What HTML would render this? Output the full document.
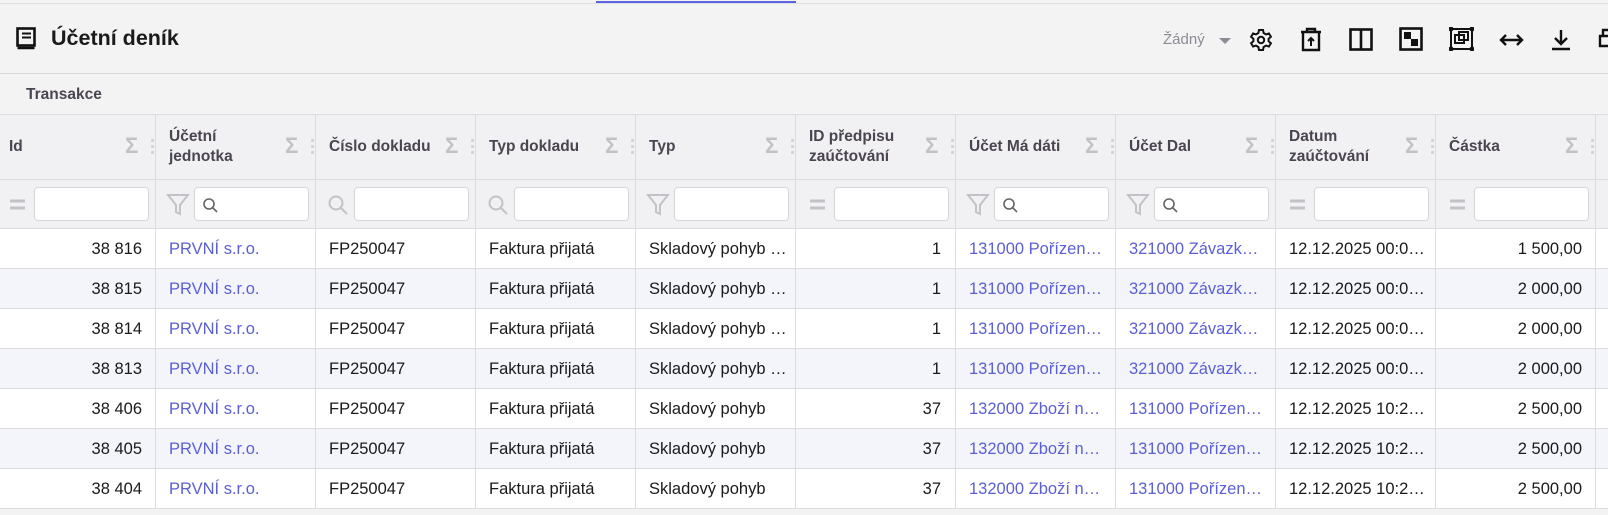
<!DOCTYPE html>
<html><head><meta charset="utf-8"><style>
*{box-sizing:border-box;margin:0;padding:0}
body{width:1608px;height:515px;overflow:hidden;background:#f3f3f4;font-family:"Liberation Sans",sans-serif;position:relative;color:#1a1a1a}
.abs{position:absolute}
.h{position:absolute;font-size:15.5px;font-weight:bold;color:#4a4550;line-height:20px}
.inp{position:absolute;top:187px;height:34px;width:115px;background:#fff;border:1px solid #d6d6da;border-radius:4px}
.vl{position:absolute;top:114px;width:1px;height:395px;background:#dcdcdf}
.hl{position:absolute;left:0;width:1608px;height:1px;background:#dcdcdf}
.sig{position:absolute;top:133px;font-size:22px;color:#c2c2c6;font-weight:bold}
.dots{position:absolute;top:139px;width:3px}
.dots i{display:block;width:3px;height:3px;background:#d2d2d6;margin-bottom:3px;border-radius:1px}
.r{position:relative;height:40px;font-size:16.5px;line-height:40px}
.r span{position:absolute;white-space:nowrap}
.l{color:#5b5fd6}
</style></head><body>
<div class="hl" style="top:3px;background:#e0e0e3"></div>
<div class="abs" style="left:596px;top:1px;width:200px;height:2px;background:#5b63e0"></div>
<div class="hl" style="top:73px"></div>
<svg class="abs" style="left:16px;top:27px" width="22" height="23" viewBox="0 0 22 23"><rect x="1.5" y="1.5" width="17" height="17" fill="none" stroke="#111" stroke-width="2.6"/><path d="M1.5 21h17" stroke="#111" stroke-width="2.4"/><path d="M6 6.5h9M6 10.5h9" stroke="#111" stroke-width="2"/></svg>
<div class="abs" style="left:51px;top:26px;font-size:21.5px;font-weight:bold;color:#1a1a1a">Účetní deník</div>
<div class="abs" style="left:1163px;top:31px;font-size:15px;color:#8c8c96">Žádný</div>
<div class="abs" style="left:1219px;top:38px;width:0;height:0;border-left:6px solid transparent;border-right:6px solid transparent;border-top:6px solid #8c8c96"></div>
<svg class="abs" style="left:1249px;top:28px" width="24" height="24" viewBox="0 0 24 24" fill="none" stroke="#111" stroke-width="2"><path d="M10 2h4l.6 3 2.4 1.4 2.9-1 2 3.4-2.3 2v2.4l2.3 2-2 3.4-2.9-1L14.6 19l-.6 3h-4l-.6-3L7 17.6l-2.9 1-2-3.4 2.3-2v-2.4l-2.3-2 2-3.4 2.9 1L9.4 5z"/><circle cx="12" cy="12" r="3.2"/></svg>
<svg class="abs" style="left:1300px;top:27px" width="22" height="25" viewBox="0 0 22 25" fill="none" stroke="#111" stroke-width="2.4"><path d="M1 5h20M7 5V2h8v3M3 5v18h16V5"/><path d="M11 19v-8M8 14l3-3 3 3" stroke-width="2"/></svg>
<svg class="abs" style="left:1349px;top:28px" width="24" height="23" viewBox="0 0 24 23" fill="none" stroke="#111" stroke-width="2.6"><rect x="1.5" y="1.5" width="21" height="20"/><path d="M12 2v20"/></svg>
<svg class="abs" style="left:1399px;top:27px" width="24" height="24" viewBox="0 0 24 24"><rect x="1.5" y="1.5" width="21" height="21" fill="none" stroke="#111" stroke-width="2.6"/><rect x="5" y="5" width="7" height="7" fill="#111"/><rect x="12" y="12" width="7" height="7" fill="#111"/></svg>
<svg class="abs" style="left:1449px;top:27px" width="25" height="24" viewBox="0 0 25 24" fill="none" stroke="#111" stroke-width="2"><rect x="2" y="2" width="21" height="20"/><rect x="6" y="8" width="9" height="8"/><rect x="10" y="5" width="9" height="8"/><g fill="#111"><circle cx="2" cy="2" r="1.5"/><circle cx="23" cy="2" r="1.5"/><circle cx="2" cy="22" r="1.5"/><circle cx="23" cy="22" r="1.5"/></g></svg>
<svg class="abs" style="left:1499px;top:31px" width="25" height="18" viewBox="0 0 25 18" fill="none" stroke="#111" stroke-width="2.4"><path d="M2 9h21M7 4L2 9l5 5M18 4l5 5-5 5"/></svg>
<svg class="abs" style="left:1551px;top:28px" width="20" height="23" viewBox="0 0 20 23" fill="none" stroke="#111" stroke-width="2.4"><path d="M10 2v14M4 10l6 6 6-6M1 21h18"/></svg>
<svg class="abs" style="left:1598px;top:28px" width="10" height="24" viewBox="0 0 10 24" fill="none" stroke="#111" stroke-width="2.4"><path d="M10 8H2v10h8M5 8V2h5"/></svg>
<div class="abs" style="left:26px;top:86px;font-size:15.5px;font-weight:bold;color:#4a4550">Transakce</div>
<div class="abs" style="left:0;top:114px;width:1608px;height:115px;background:#f1f1f3"></div>
<div class="hl" style="top:114px"></div>
<div class="hl" style="top:179px"></div>
<div class="abs" style="left:0;top:229px;width:1608px;height:280px;background:#fff"></div>
<div class="abs" style="left:0;top:269px;width:1608px;height:40px;background:#f4f5fb"></div>
<div class="abs" style="left:0;top:349px;width:1608px;height:40px;background:#f4f5fb"></div>
<div class="abs" style="left:0;top:429px;width:1608px;height:40px;background:#f4f5fb"></div>
<div class="hl" style="top:228px"></div><div class="hl" style="top:268px"></div><div class="hl" style="top:308px"></div><div class="hl" style="top:348px"></div><div class="hl" style="top:388px"></div><div class="hl" style="top:428px"></div><div class="hl" style="top:468px"></div><div class="hl" style="top:508px"></div>
<div class="vl" style="left:155px"></div><div class="vl" style="left:315px"></div><div class="vl" style="left:475px"></div><div class="vl" style="left:635px"></div><div class="vl" style="left:795px"></div><div class="vl" style="left:955px"></div><div class="vl" style="left:1115px"></div><div class="vl" style="left:1275px"></div><div class="vl" style="left:1435px"></div><div class="vl" style="left:1595px"></div>
<div class="h" style="left:9px;top:137px">Id</div>
<div class="h" style="left:169px;top:127px">Účetní<br>jednotka</div>
<div class="h" style="left:329px;top:137px">Číslo dokladu</div>
<div class="h" style="left:489px;top:137px">Typ dokladu</div>
<div class="h" style="left:649px;top:137px">Typ</div>
<div class="h" style="left:809px;top:127px">ID předpisu<br>zaúčtování</div>
<div class="h" style="left:969px;top:137px">Účet Má dáti</div>
<div class="h" style="left:1129px;top:137px">Účet Dal</div>
<div class="h" style="left:1289px;top:127px">Datum<br>zaúčtování</div>
<div class="h" style="left:1449px;top:137px">Částka</div>
<div class="sig" style="left:125px">Σ</div><div class="sig" style="left:285px">Σ</div><div class="sig" style="left:445px">Σ</div><div class="sig" style="left:605px">Σ</div><div class="sig" style="left:765px">Σ</div><div class="sig" style="left:925px">Σ</div><div class="sig" style="left:1085px">Σ</div><div class="sig" style="left:1245px">Σ</div><div class="sig" style="left:1405px">Σ</div><div class="sig" style="left:1565px">Σ</div>
<div class="dots" style="left:151px"><i></i><i></i><i></i></div><div class="dots" style="left:311px"><i></i><i></i><i></i></div><div class="dots" style="left:471px"><i></i><i></i><i></i></div><div class="dots" style="left:631px"><i></i><i></i><i></i></div><div class="dots" style="left:791px"><i></i><i></i><i></i></div><div class="dots" style="left:951px"><i></i><i></i><i></i></div><div class="dots" style="left:1111px"><i></i><i></i><i></i></div><div class="dots" style="left:1271px"><i></i><i></i><i></i></div><div class="dots" style="left:1431px"><i></i><i></i><i></i></div><div class="dots" style="left:1591px"><i></i><i></i><i></i></div>
<div class="inp" style="left:34px"></div><div class="inp" style="left:194px"></div><div class="inp" style="left:354px"></div><div class="inp" style="left:514px"></div><div class="inp" style="left:674px"></div><div class="inp" style="left:834px"></div><div class="inp" style="left:994px"></div><div class="inp" style="left:1154px"></div><div class="inp" style="left:1314px"></div><div class="inp" style="left:1474px"></div>
<svg class="abs" style="left:0;top:180px" width="1608" height="49" fill="none" stroke="#c2c2c8" stroke-width="2">
<g stroke-width="3"><path d="M10 21h15M10 28h15"/><path d="M810 21h15M810 28h15"/><path d="M1290 21h15M1290 28h15"/><path d="M1450 21h15M1450 28h15"/></g>
<path d="M168 15h20l-8 10v9l-4-2v-7z"/><path d="M648 15h20l-8 10v9l-4-2v-7z"/><path d="M968 15h20l-8 10v9l-4-2v-7z"/><path d="M1128 15h20l-8 10v9l-4-2v-7z"/>
<circle cx="336" cy="23" r="6.5"/><path d="M341 28l6 6"/><circle cx="496" cy="23" r="6.5"/><path d="M501 28l6 6"/>
<g stroke="#666" stroke-width="1.6"><circle cx="209" cy="24" r="5"/><path d="M213 28l4 4"/><circle cx="1009" cy="24" r="5"/><path d="M1013 28l4 4"/><circle cx="1169" cy="24" r="5"/><path d="M1173 28l4 4"/></g>
</svg>
<div class="abs" style="left:0;top:229px;width:1608px">
<div class="r"><span style="right:1466px">38 816</span><span class="l" style="left:169px">PRVNÍ s.r.o.</span><span style="left:329px">FP250047</span><span style="left:489px">Faktura přijatá</span><span style="left:649px">Skladový pohyb …</span><span style="right:667px">1</span><span class="l" style="left:969px">131000 Pořízen…</span><span class="l" style="left:1129px">321000 Závazk…</span><span style="left:1289px">12.12.2025 00:0…</span><span style="right:26px">1 500,00</span></div>
<div class="r"><span style="right:1466px">38 815</span><span class="l" style="left:169px">PRVNÍ s.r.o.</span><span style="left:329px">FP250047</span><span style="left:489px">Faktura přijatá</span><span style="left:649px">Skladový pohyb …</span><span style="right:667px">1</span><span class="l" style="left:969px">131000 Pořízen…</span><span class="l" style="left:1129px">321000 Závazk…</span><span style="left:1289px">12.12.2025 00:0…</span><span style="right:26px">2 000,00</span></div>
<div class="r"><span style="right:1466px">38 814</span><span class="l" style="left:169px">PRVNÍ s.r.o.</span><span style="left:329px">FP250047</span><span style="left:489px">Faktura přijatá</span><span style="left:649px">Skladový pohyb …</span><span style="right:667px">1</span><span class="l" style="left:969px">131000 Pořízen…</span><span class="l" style="left:1129px">321000 Závazk…</span><span style="left:1289px">12.12.2025 00:0…</span><span style="right:26px">2 000,00</span></div>
<div class="r"><span style="right:1466px">38 813</span><span class="l" style="left:169px">PRVNÍ s.r.o.</span><span style="left:329px">FP250047</span><span style="left:489px">Faktura přijatá</span><span style="left:649px">Skladový pohyb …</span><span style="right:667px">1</span><span class="l" style="left:969px">131000 Pořízen…</span><span class="l" style="left:1129px">321000 Závazk…</span><span style="left:1289px">12.12.2025 00:0…</span><span style="right:26px">2 000,00</span></div>
<div class="r"><span style="right:1466px">38 406</span><span class="l" style="left:169px">PRVNÍ s.r.o.</span><span style="left:329px">FP250047</span><span style="left:489px">Faktura přijatá</span><span style="left:649px">Skladový pohyb</span><span style="right:667px">37</span><span class="l" style="left:969px">132000 Zboží n…</span><span class="l" style="left:1129px">131000 Pořízen…</span><span style="left:1289px">12.12.2025 10:2…</span><span style="right:26px">2 500,00</span></div>
<div class="r"><span style="right:1466px">38 405</span><span class="l" style="left:169px">PRVNÍ s.r.o.</span><span style="left:329px">FP250047</span><span style="left:489px">Faktura přijatá</span><span style="left:649px">Skladový pohyb</span><span style="right:667px">37</span><span class="l" style="left:969px">132000 Zboží n…</span><span class="l" style="left:1129px">131000 Pořízen…</span><span style="left:1289px">12.12.2025 10:2…</span><span style="right:26px">2 500,00</span></div>
<div class="r"><span style="right:1466px">38 404</span><span class="l" style="left:169px">PRVNÍ s.r.o.</span><span style="left:329px">FP250047</span><span style="left:489px">Faktura přijatá</span><span style="left:649px">Skladový pohyb</span><span style="right:667px">37</span><span class="l" style="left:969px">132000 Zboží n…</span><span class="l" style="left:1129px">131000 Pořízen…</span><span style="left:1289px">12.12.2025 10:2…</span><span style="right:26px">2 500,00</span></div>
</div>
</body></html>
